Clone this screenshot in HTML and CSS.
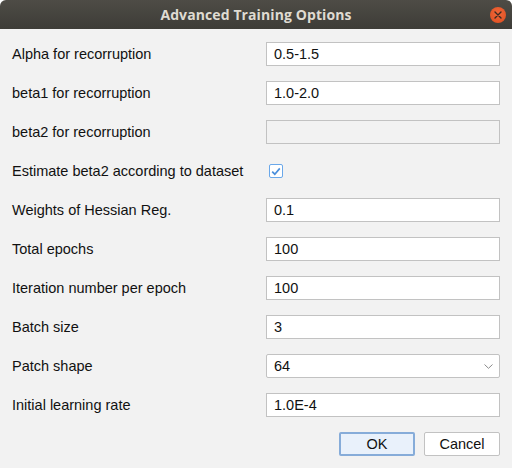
FILE: index.html
```html
<!DOCTYPE html>
<html>
<head>
<meta charset="utf-8">
<link rel="stylesheet" href="styles.css">
</head>
<body>
<div class="window">
  <div class="titlebar">
    <span class="title">Advanced Training Options</span>
    <span class="close">
      <svg width="8" height="8" viewBox="0 0 8 8"><path d="M1 1L7 7M7 1L1 7" stroke="#3a2a22" stroke-width="1.4" stroke-linecap="round"/></svg>
    </span>
  </div>
  <div class="content">
    <div class="form">
      <div class="label">Alpha for recorruption</div>
      <div class="field">0.5-1.5</div>
      <div class="label">beta1 for recorruption</div>
      <div class="field">1.0-2.0</div>
      <div class="label">beta2 for recorruption</div>
      <div class="field disabled"></div>
      <div class="label">Estimate beta2 according to dataset</div>
      <div class="check-cell">
        <span class="checkbox">
          <svg width="10" height="9" viewBox="0 0 10 9"><path d="M1.2 4.6L3.8 7.2L8.8 1.4" fill="none" stroke="#4a8fdc" stroke-width="1.7"/></svg>
        </span>
      </div>
      <div class="label">Weights of Hessian Reg.</div>
      <div class="field">0.1</div>
      <div class="label">Total epochs</div>
      <div class="field">100</div>
      <div class="label">Iteration number per epoch</div>
      <div class="field">100</div>
      <div class="label">Batch size</div>
      <div class="field">3</div>
      <div class="label">Patch shape</div>
      <div class="field select">
        <span>64</span>
        <svg class="chev" width="9" height="5" viewBox="0 0 9 5"><path d="M0.5 0.5L4.5 4.3L8.5 0.5" fill="none" stroke="#8a8a8a" stroke-width="1"/></svg>
      </div>
      <div class="label">Initial learning rate</div>
      <div class="field">1.0E-4</div>
    </div>
    <div class="buttons">
      <div class="btn ok">OK</div>
      <div class="btn">Cancel</div>
    </div>
  </div>
</div>
</body>
</html>
```
FILE: styles.css
```css
html, body {
  margin: 0;
  padding: 0;
  background: #ffffff;
}
.window {
  width: 512px;
  height: 468px;
  background: #f2f2f2;
  border-radius: 6px 6px 0 0;
  overflow: hidden;
  font-family: "Liberation Sans", Arial, sans-serif;
  font-size: 14.5px;
  color: #111111;
}
.titlebar {
  height: 29px;
  background: linear-gradient(#4e4c46, #3d3c37);
  display: flex;
  align-items: center;
  justify-content: center;
  position: relative;
}
.title {
  font-family: "Open Sans", "DejaVu Sans", sans-serif;
  font-weight: 700;
  font-size: 14px;
  color: #dfdbd2;
  letter-spacing: 0.1px;
}
.close {
  position: absolute;
  right: 6px;
  top: 7px;
  width: 16px;
  height: 16px;
  border-radius: 50%;
  background: radial-gradient(circle at 50% 40%, #f2683a, #dc4d1f);
  display: flex;
  align-items: center;
  justify-content: center;
}
.content {
  padding: 13px 12px 0 12px;
}
.form {
  display: grid;
  grid-template-columns: 254px 234px;
  grid-auto-rows: 24px;
  row-gap: 15px;
}
.label {
  display: flex;
  align-items: center;
}
.field {
  box-sizing: border-box;
  height: 24px;
  background: #ffffff;
  border: 1px solid #c2c2c2;
  padding: 0 7px;
  display: flex;
  align-items: center;
}
.field.disabled {
  background: #f2f2f2;
}
.field.select {
  justify-content: space-between;
  border-radius: 2px;
  padding-right: 6px;
}
.chev {
  margin-top: 1px;
}
.check-cell {
  display: flex;
  align-items: center;
  padding-left: 3px;
}
.checkbox {
  box-sizing: border-box;
  width: 14px;
  height: 14px;
  border: 1px solid #6aa8ea;
  border-radius: 2px;
  background: #ffffff;
  display: flex;
  align-items: center;
  justify-content: center;
}
.buttons {
  display: flex;
  justify-content: flex-end;
  gap: 9px;
  margin-top: 15px;
}
.btn {
  box-sizing: border-box;
  width: 76px;
  height: 24px;
  border: 1px solid #c2c2c2;
  border-radius: 2px;
  background: #ffffff;
  display: flex;
  align-items: center;
  justify-content: center;
}
.btn.ok {
  background: #e9f1fb;
  border: 2px solid #86acd9;
}
```
